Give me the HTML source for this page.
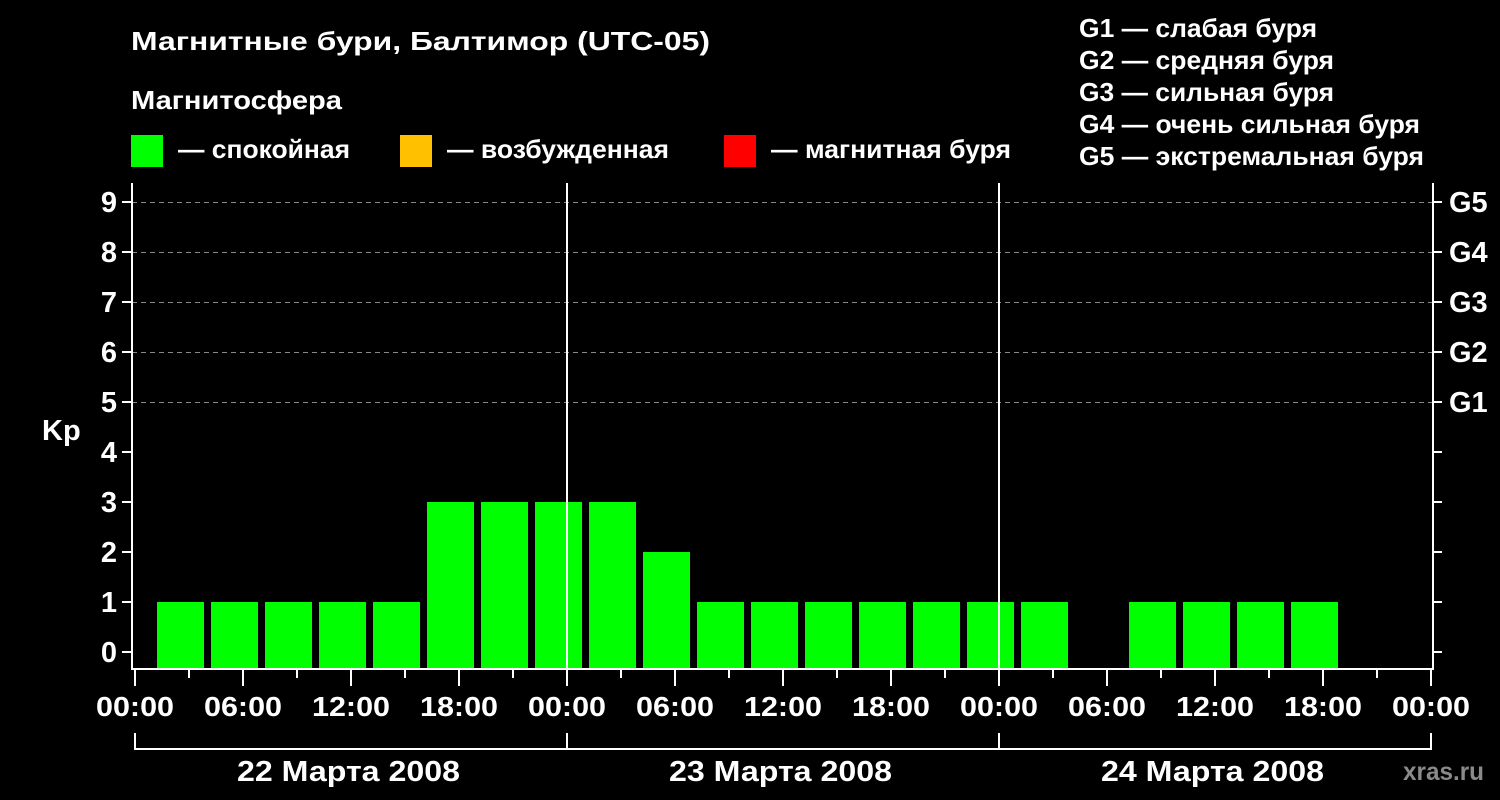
<!DOCTYPE html>
<html><head><meta charset="utf-8"><style>
html,body{margin:0;padding:0;background:#000;width:1500px;height:800px;overflow:hidden}
svg{display:block}
text{font-family:"Liberation Sans",sans-serif;font-weight:bold;fill:#fff}
</style></head><body>
<svg width="1500" height="800" viewBox="0 0 1500 800">
<g font-size="26">
<text x="131" y="50" textLength="579" lengthAdjust="spacingAndGlyphs">Магнитные бури, Балтимор (UTC-05)</text>
<text x="131" y="109" textLength="211" lengthAdjust="spacingAndGlyphs">Магнитосфера</text>
<text x="178" y="158" textLength="172" lengthAdjust="spacingAndGlyphs">— спокойная</text>
<text x="447" y="158" textLength="222" lengthAdjust="spacingAndGlyphs">— возбужденная</text>
<text x="771" y="158" textLength="240" lengthAdjust="spacingAndGlyphs">— магнитная буря</text>
<text x="1079" y="37" textLength="238" lengthAdjust="spacingAndGlyphs">G1 — слабая буря</text>
<text x="1079" y="69" textLength="255" lengthAdjust="spacingAndGlyphs">G2 — средняя буря</text>
<text x="1079" y="101" textLength="255" lengthAdjust="spacingAndGlyphs">G3 — сильная буря</text>
<text x="1079" y="133" textLength="341" lengthAdjust="spacingAndGlyphs">G4 — очень сильная буря</text>
<text x="1079" y="165" textLength="345" lengthAdjust="spacingAndGlyphs">G5 — экстремальная буря</text>
</g>
<rect x="131" y="135" width="32" height="32" fill="#00ff00"/>
<rect x="400" y="135" width="32" height="32" fill="#ffc000"/>
<rect x="724" y="135" width="32" height="32" fill="#ff0000"/>
<g stroke="#888" stroke-width="1" stroke-dasharray="5,4">
<line x1="132" y1="202.5" x2="1432" y2="202.5"/>
<line x1="132" y1="252.5" x2="1432" y2="252.5"/>
<line x1="132" y1="302.5" x2="1432" y2="302.5"/>
<line x1="132" y1="352.5" x2="1432" y2="352.5"/>
<line x1="132" y1="402.5" x2="1432" y2="402.5"/>
</g>
<g fill="#00ff00">
<rect x="157" y="602" width="47" height="66"/>
<rect x="211" y="602" width="47" height="66"/>
<rect x="265" y="602" width="47" height="66"/>
<rect x="319" y="602" width="47" height="66"/>
<rect x="373" y="602" width="47" height="66"/>
<rect x="427" y="502" width="47" height="166"/>
<rect x="481" y="502" width="47" height="166"/>
<rect x="535" y="502" width="47" height="166"/>
<rect x="589" y="502" width="47" height="166"/>
<rect x="643" y="552" width="47" height="116"/>
<rect x="697" y="602" width="47" height="66"/>
<rect x="751" y="602" width="47" height="66"/>
<rect x="805" y="602" width="47" height="66"/>
<rect x="859" y="602" width="47" height="66"/>
<rect x="913" y="602" width="47" height="66"/>
<rect x="967" y="602" width="47" height="66"/>
<rect x="1021" y="602" width="47" height="66"/>
<rect x="1129" y="602" width="47" height="66"/>
<rect x="1183" y="602" width="47" height="66"/>
<rect x="1237" y="602" width="47" height="66"/>
<rect x="1291" y="602" width="47" height="66"/>
</g>
<g stroke="#fff" stroke-width="2" fill="none">
<polyline points="132,183 132,669 1433,669 1433,183"/>
<line x1="567" y1="183" x2="567" y2="669"/>
<line x1="999" y1="183" x2="999" y2="669"/>
<path d="M122 202H131M122 252H131M122 302H131M122 352H131M122 402H131M122 452H131M122 502H131M122 552H131M122 602H131M122 652H131"/>
<path d="M1433 202H1442M1433 252H1442M1433 302H1442M1433 352H1442M1433 402H1442M1433 452H1442M1433 502H1442M1433 552H1442M1433 602H1442M1433 652H1442"/>
<path d="M135 670V686M243 670V686M351 670V686M459 670V686M567 670V686M675 670V686M783 670V686M891 670V686M999 670V686M1107 670V686M1215 670V686M1323 670V686M1431 670V686"/>
<path d="M189 670V678M297 670V678M405 670V678M513 670V678M621 670V678M729 670V678M837 670V678M945 670V678M1053 670V678M1161 670V678M1269 670V678M1377 670V678"/>
<path d="M135 733V749H1431V733M567 733V749M999 733V749"/>
</g>
<g font-size="29" text-anchor="end">
<text x="117" y="212">9</text><text x="117" y="262">8</text><text x="117" y="312">7</text><text x="117" y="362">6</text><text x="117" y="412">5</text><text x="117" y="462">4</text><text x="117" y="512">3</text><text x="117" y="562">2</text><text x="117" y="612">1</text><text x="117" y="662">0</text>
</g>
<text x="42" y="440" font-size="29">Kp</text>
<g font-size="29">
<text x="1449" y="212">G5</text><text x="1449" y="262">G4</text><text x="1449" y="312">G3</text><text x="1449" y="362">G2</text><text x="1449" y="412">G1</text>
</g>
<g font-size="28">
<text x="96" y="716" textLength="78" lengthAdjust="spacingAndGlyphs">00:00</text>
<text x="204" y="716" textLength="78" lengthAdjust="spacingAndGlyphs">06:00</text>
<text x="312" y="716" textLength="78" lengthAdjust="spacingAndGlyphs">12:00</text>
<text x="420" y="716" textLength="78" lengthAdjust="spacingAndGlyphs">18:00</text>
<text x="528" y="716" textLength="78" lengthAdjust="spacingAndGlyphs">00:00</text>
<text x="636" y="716" textLength="78" lengthAdjust="spacingAndGlyphs">06:00</text>
<text x="744" y="716" textLength="78" lengthAdjust="spacingAndGlyphs">12:00</text>
<text x="852" y="716" textLength="78" lengthAdjust="spacingAndGlyphs">18:00</text>
<text x="960" y="716" textLength="78" lengthAdjust="spacingAndGlyphs">00:00</text>
<text x="1068" y="716" textLength="78" lengthAdjust="spacingAndGlyphs">06:00</text>
<text x="1176" y="716" textLength="78" lengthAdjust="spacingAndGlyphs">12:00</text>
<text x="1284" y="716" textLength="78" lengthAdjust="spacingAndGlyphs">18:00</text>
<text x="1392" y="716" textLength="78" lengthAdjust="spacingAndGlyphs">00:00</text>
</g>
<g font-size="29">
<text x="237" y="781" textLength="223" lengthAdjust="spacingAndGlyphs">22 Марта 2008</text>
<text x="669" y="781" textLength="223" lengthAdjust="spacingAndGlyphs">23 Марта 2008</text>
<text x="1101" y="781" textLength="223" lengthAdjust="spacingAndGlyphs">24 Марта 2008</text>
</g>
<text x="1403" y="780" font-size="25" style="fill:#8a8a8a" textLength="81" lengthAdjust="spacingAndGlyphs">xras.ru</text>
</svg>
</body></html>
